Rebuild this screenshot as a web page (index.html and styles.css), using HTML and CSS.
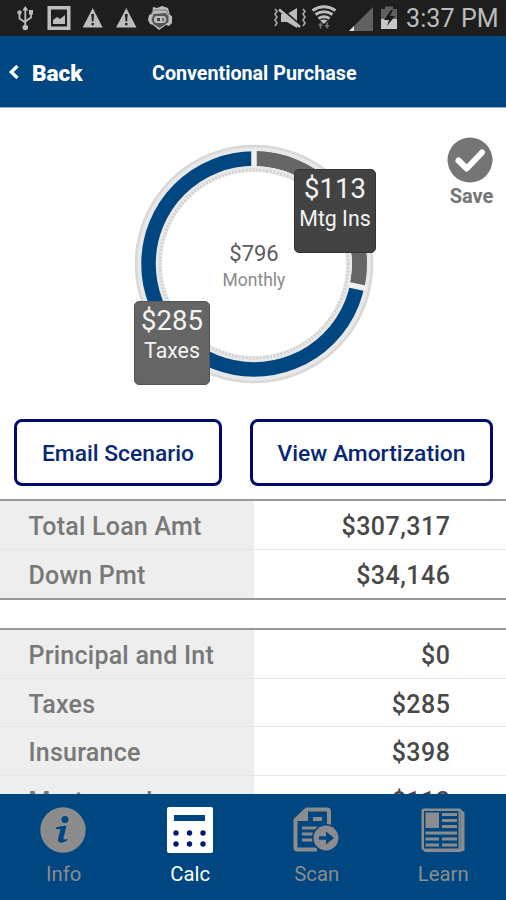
FILE: index.html
```html
<!DOCTYPE html>
<html lang="en">
<head>
<meta charset="utf-8">
<title>Conventional Purchase</title>
<link rel="stylesheet" href="styles.css">
</head>
<body>
<div class="app">
  <div class="status">
    <svg class="status-icons" width="180" height="36" viewBox="0 0 180 36" fill="#bdbdbd">
      <g stroke="#bdbdbd" stroke-width="1.8" fill="none"><path d="M25.3 8v20M19.5 13v5.5l5.8 4M31 13v4.500l-5.700 4"/></g>
      <path d="M22.300 10.500l3-4.500 3 4.500zM29 10h4v4.500h-4z"/><circle cx="19.500" cy="12.500" r="2.200"/><circle cx="25.300" cy="27.500" r="2.800"/>
      <path fill-rule="evenodd" d="M47.500 6h23v24h-23zM51 9.500v17h16v-17z"/><path d="M53 24v-4l4-3 3 2 5-4v9z"/>
      <path d="M92.700 8l10 19.500h-20z"/><path d="M126.300 8l10.200 19.500h-20.400z"/>
      <g fill="#222"><path d="M91.300 14h2.800l-.6 7.500h-1.600zM91.500 23h2.400v2.300h-2.400zM124.900 14h2.800l-.6 7.500h-1.600zM125.100 23h2.400v2.300h-2.400z"/></g>
      <path d="M153 7l4 1 5-2 6 2 2 7 2 1v7l-3 3-3-1-7 5-6-5-3-1-2-4 1-5 3-1z"/>
      <path d="M153.500 14l12-1 3 3v6l-4 3-5 3-6-4-2-4z" fill="#555"/>
      <rect x="154" y="16" width="12" height="7" rx="3"/><rect x="157" y="18" width="3" height="3" fill="#444"/><rect x="162" y="18" width="2" height="3" fill="#666"/>
      <path d="M150 15l4-5 12 0 3 5" fill="none" stroke="#777" stroke-width="1"/>
    </svg>
    <svg class="status-icons" width="132" height="36" viewBox="270 0 132 36" fill="#bdbdbd">
      <path d="M281 14h6l10-6v20l-10-6h-6z"/>
      <path d="M281 8l19 17" stroke="#1e1e1e" stroke-width="2"/><path d="M279 9.500l21 17.500" stroke="#bdbdbd" stroke-width="2.600"/>
      <path d="M275 9l2 2.500-2 2.500 2 3-2 3 2 3-2 3M303 9l2 2.500-2 2.500 2 3-2 3 2 3-2 3" fill="none" stroke="#aaa" stroke-width="1.600"/>
      <g fill="none" stroke="#bdbdbd" stroke-width="3"><path d="M312.500 10.500q11.500-7.500 23 0M315.500 14.500q8.500-5.500 17 0M318.500 18.500q5.500-3.500 11 0"/></g>
      <path d="M320 20.500q4-2 7.500 0l-3.700 3.500z"/>
      <path d="M318 25.500l2.500-3 2.500 3h-1.700v3h-1.600v-3zM324.500 25h1.700v-2.500h1.600v2.500h1.700l-2.500 4z" fill="#777"/>
      <path d="M373 7v24h-24z" fill="#606060"/><path d="M354 26v5h-5z" fill="#e0e0e0"/>
      <path d="M381 9h4V6.500h8V9h4v11h-16z" fill="#606060"/><path d="M381 19h16v10h-16z" fill="#c6c6c6"/>
      <path d="M391 10l-7 10h5l-2 6 8-10h-5l3-6z" fill="#1c1c1c"/>
    </svg>
    <span class="clock">3:37 PM</span>
  </div>

  <header class="header">
    <a class="back"><svg width="12" height="16" viewBox="0 0 12 16"><path d="M9.500 2L3.300 8l6.200 6" fill="none" stroke="#fff" stroke-width="3.300"/></svg><span>Back</span></a>
    <h1 class="title">Conventional Purchase</h1>
  </header>

  <main class="content">
    <section class="summary">
      <div class="chart">
        <svg width="240" height="240" viewBox="-120 -120 240 240" fill="none">
          <circle r="105.500" stroke="#e8e8e8" stroke-width="27"/>
          <circle r="118" stroke="#d8d8d8" stroke-width="2.500"/>
          <circle r="94" stroke="#cecece" stroke-width="3" stroke-dasharray="1.500 2"/>
          <circle r="105.500" stroke="#004680" stroke-width="14.500"/>
          <path d="M0-105.500A105.500 105.500 0 0 1 103.100 22.500" stroke="#666" stroke-width="14.500"/>
          <path d="M0-97V-115M94.800 20.700L112.400 24.500" stroke="#f0f0f0" stroke-width="5.500"/>
        </svg>
        <div class="total"><span class="total-value">$796</span><span class="total-label">Monthly</span></div>
        <div class="tip tip-ins"><span class="tip-value">$113</span><span class="tip-label">Mtg Ins</span></div>
        <div class="tip tip-tax"><span class="tip-value">$285</span><span class="tip-label">Taxes</span></div>
      </div>
      <div class="save">
        <svg width="46" height="46" viewBox="0 0 46 46"><circle cx="23" cy="23" r="22.500" fill="#757575"/><path d="M11.500 23.500l8.200 8L35 15.500" fill="none" stroke="#fff" stroke-width="6" stroke-linecap="round" stroke-linejoin="round"/></svg>
        <span>Save</span>
      </div>
    </section>

    <div class="actions">
      <button class="btn btn-email">Email Scenario</button>
      <button class="btn btn-view">View Amortization</button>
    </div>

    <div class="table">
      <div class="row"><span class="label">Total Loan Amt</span><span class="value">$307,317</span></div>
      <div class="row"><span class="label">Down Pmt</span><span class="value">$34,146</span></div>
    </div>
    <div class="table table-costs">
      <div class="row"><span class="label">Principal and Int</span><span class="value">$0</span></div>
      <div class="row"><span class="label">Taxes</span><span class="value">$285</span></div>
      <div class="row"><span class="label">Insurance</span><span class="value">$398</span></div>
      <div class="row"><span class="label">Mortgage Ins</span><span class="value">$113</span></div>
    </div>
  </main>

  <nav class="tabs">
    <a class="tab"><svg width="48" height="48" viewBox="0 0 48 48"><circle cx="24" cy="24" r="22.700" fill="#8c8c8c"/><g fill="#004680"><circle cx="26" cy="13.500" r="3.500"/><path d="M17 21.500q5-2 10.500-1.800l-3 12.300q-.5 2.500 2.800 1l1.200-.7-.6 2.500q-9 4.500-9-1.500l2.600-10.500-4.500.4z"/></g></svg><span>Info</span></a>
    <a class="tab active"><svg width="48" height="48" viewBox="0 0 48 48"><rect x="1" y="1" width="46" height="46" rx="2" fill="#fff"/><path d="M8 9h31v6H8z" fill="#004680"/><g fill="#001a70"><circle cx="10" cy="27" r="2.700"/><circle cx="23.500" cy="27" r="2.700"/><circle cx="37" cy="27" r="2.700"/><circle cx="10" cy="38" r="2.700"/><circle cx="23.500" cy="38" r="2.700"/><circle cx="37" cy="38" r="2.700"/></g></svg><span>Calc</span></a>
    <a class="tab"><svg width="48" height="48" viewBox="0 0 48 48"><g fill="none" stroke="#8c8c8c" stroke-width="4"><path d="M25 43.500H5.500Q3.500 43.500 3.500 41.500V14L14.500 3.500H35Q37 3.500 37 5.500V20"/></g><path d="M2 13L14 2h2v13H2z" fill="#8c8c8c"/><path d="M17 15V7.500h16V20" fill="none" stroke="#004680" stroke-width="2"/><path d="M21 11h9v4h-9zM10 20.500h16v3H10zM10 26.500h12v3H10zM10 32.500h11v3H10z" fill="#8c8c8c"/><circle cx="34" cy="32" r="14" fill="#004680"/><circle cx="34" cy="32" r="12.500" fill="#8c8c8c"/><path d="M27 30.300h7v-4.800l8 6.500-8 6.500v-4.800h-7z" fill="#004680"/></svg><span>Scan</span></a>
    <a class="tab"><svg width="48" height="48" viewBox="0 0 48 48"><path d="M4 2.500h37l4.500 4v38L41 46H6l-3.500-3.500V4z" fill="#8c8c8c"/><path d="M5 5h34.500v37.500H5z" fill="#004680"/><path d="M41.500 5v38" stroke="#667a89"/><g fill="#8c8c8c"><rect x="6.500" y="6.500" width="13.500" height="15.500"/><path d="M23 7h15v3H23zM23 13h15v3H23zM23 19h15v3H23zM6.500 25.500H38v3H6.500zM6.500 31.500H20v3H6.500zM23 31.500h15v3H23zM6.500 37.500H20v3H6.500zM23 37.500h15v3H23z"/></g></svg><span>Learn</span></a>
  </nav>
</div>
</body>
</html>
```
FILE: styles.css
```css
* { box-sizing: border-box; }
body { margin: 0; font-family: Roboto, "Liberation Sans", sans-serif; background: #fff; }
.app { width: 506px; height: 900px; display: flex; flex-direction: column; overflow: hidden; }

.status { height: 36px; flex: none; display: flex; align-items: center; background: #1e1e1e; }
.status-icons { flex: none; }
.status-icons + .status-icons { margin-left: 90px; }
.clock { margin: 2px 0 0 4px; font-size: 25px; line-height: 36px; letter-spacing: 0.1px; color: #bdbdbd; white-space: nowrap; }

.header { height: 72px; flex: none; display: flex; align-items: center; background: #004680; color: #fff; border-bottom: 1px solid #9aafc4; }
.back { width: 152px; padding: 3px 0 0 8px; display: flex; align-items: center; gap: 12px; font-size: 22.600px; font-weight: 900; }
.back svg { margin-top: -3px; }
.title { margin: 3px 0 0; font-size: 19.700px; font-weight: 700; white-space: nowrap; }

.content { flex: 1; min-height: 0; overflow: hidden; }
.summary { height: 311px; display: flex; padding-top: 35.500px; }
.chart { position: relative; width: 240px; height: 240px; margin-left: 134px; }
.chart > svg { display: block; }
.total { position: absolute; inset: 0; display: flex; flex-direction: column; align-items: center; padding-top: 96px; }
.total-value { font-size: 22px; line-height: 28px; color: #5c5c5c; }
.total-label { font-size: 17.500px; line-height: 25px; color: #8a8a8a; }
.tip { position: absolute; height: 84px; padding-top: 2px; border-radius: 5px; display: flex; flex-direction: column; align-items: center; color: #f4f4f4; white-space: nowrap; }
.tip-ins { left: 160px; top: 25px; width: 82px; background: #434343; border: 1px solid #333; }
.tip-tax { left: 0; top: 157px; width: 76px; background: #656565; border: 1px solid #555; }
.tip-value { font-size: 27.500px; line-height: 33px; }
.tip-label { font-size: 21.300px; line-height: 28px; }
.save { width: 46px; margin: -6.500px 0 0 73px; display: flex; flex-direction: column; align-items: center; font-size: 20px; font-weight: 700; line-height: 26px; color: #757575; }
.save span { margin: 0 -3px 0 0; }

.actions { height: 80px; display: flex; gap: 28px; padding-left: 14px; }
.btn { height: 67px; padding: 1px 0 0; background: #fff; border: 3px solid #000a6b; border-radius: 8px; font: 500 22.800px Roboto, sans-serif; color: #082873; white-space: nowrap; }
.btn-email { width: 208px; }
.btn-view { width: 243px; }

.table { border-top: 2px solid #999; border-bottom: 2px solid #999; height: 101px; display: flex; flex-direction: column; }
.table-costs { height: 200px; margin-top: 28px; }
.row { height: 48.700px; flex: none; display: flex; border-bottom: 1px solid #e6e6e6; font-size: 25px; font-weight: 500; line-height: 51px; white-space: nowrap; }
.table:not(.table-costs) .row:last-child { border-bottom: 0; }
.label { width: 254px; padding-left: 28.500px; background: #eee; color: #787878; letter-spacing: 0.230px; }
.value { flex: 1; padding-right: 55.500px; text-align: right; color: #484848; letter-spacing: 0.500px; }

.tabs { height: 106px; flex: none; display: grid; grid-template-columns: repeat(4, 1fr); background: #004680; }
.tab { display: flex; flex-direction: column; align-items: center; padding-top: 12px; font-size: 20.300px; line-height: 28px; color: #8c8c8c; }
.tab span { margin: 6px 0 0 1px; }
.active { color: #fff; }
```
